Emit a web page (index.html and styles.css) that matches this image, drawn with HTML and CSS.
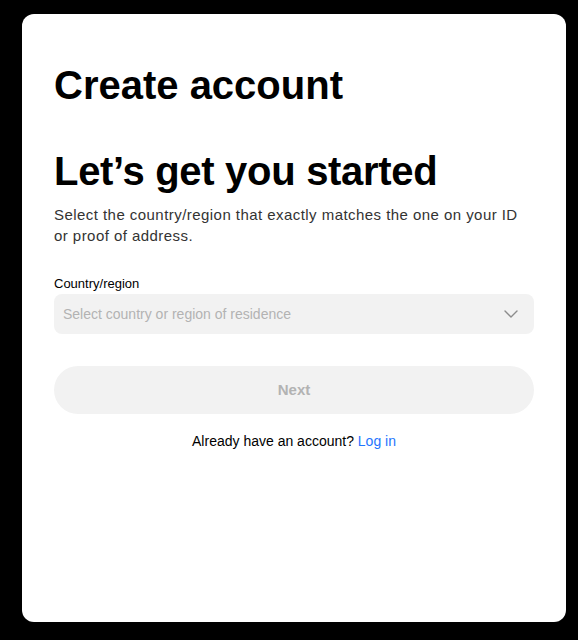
FILE: index.html
```html
<!DOCTYPE html>
<html lang="en">
<head>
  <meta charset="UTF-8" />
  <meta name="viewport" content="width=device-width, initial-scale=1.0"/>
  <title>Create account</title>
  <link rel="stylesheet" href="styles.css">
</head>
<body>

  <div class="card">
    <h1>Create account</h1>

    <h2>Let’s get you started</h2>
    <p class="intro">Select the country/region that exactly matches the one on your ID or proof of address.</p>

    <label class="field-label" for="country">Country/region</label>
    <div class="select" id="country">
      <span class="placeholder">Select country or region of residence</span>
      <svg class="chevron" width="14" height="8" viewBox="0 0 14 8">
        <path d="M1 1l6 6 6-6" fill="none" stroke="#8c8c8c" stroke-width="1.4" stroke-linecap="round" stroke-linejoin="round"/>
      </svg>
    </div>

    <button class="next-btn" disabled>Next</button>

    <p class="login">Already have an account? <a href="#">Log in</a></p>
  </div>

</body>
</html>
```

FILE: styles.css
```css
html, body {
  height: 100%;
}

body {
  margin: 0;
  background: #000;
  font-family: 'Liberation Sans', Arial, sans-serif;
  color: #000;
  padding: 14px 12px 18px 22px;
  box-sizing: border-box;
}

.card {
  background: #fff;
  border-radius: 12px;
  height: 608px;
  padding: 47px 32px 0;
  box-sizing: border-box;
}

h1, h2 {
  font-size: 40px;
  line-height: 48px;
  font-weight: bold;
  letter-spacing: -0.3px;
  margin: 0;
}

h1 {
  letter-spacing: 0;
}

h2 {
  margin-top: 38px;
}

.intro {
  font-size: 15px;
  line-height: 21px;
  letter-spacing: 0.45px;
  color: #333;
  margin: 9px 0 0;
  max-width: 476px;
}

.field-label {
  display: block;
  font-size: 13px;
  line-height: 18px;
  margin-top: 28px;
  padding-top: 1px;
}

.select {
  margin-top: 1px;
  height: 40px;
  background: #f2f2f2;
  border-radius: 8px;
  display: flex;
  align-items: center;
  justify-content: space-between;
  padding: 0 16px 0 9px;
}

.placeholder {
  font-size: 14px;
  color: #b3b3b3;
}

.chevron {
  display: block;
}

.next-btn {
  display: block;
  width: 100%;
  height: 48px;
  margin-top: 32px;
  padding: 0 0 2px;
  border: none;
  border-radius: 24px;
  background: #f2f2f2;
  color: #b3b3b3;
  font-family: inherit;
  font-size: 15px;
  font-weight: bold;
}

.login {
  text-align: center;
  font-size: 14px;
  line-height: 20px;
  margin: 17px 0 0;
}

.login a {
  color: #1f75fe;
  text-decoration: none;
}
```
